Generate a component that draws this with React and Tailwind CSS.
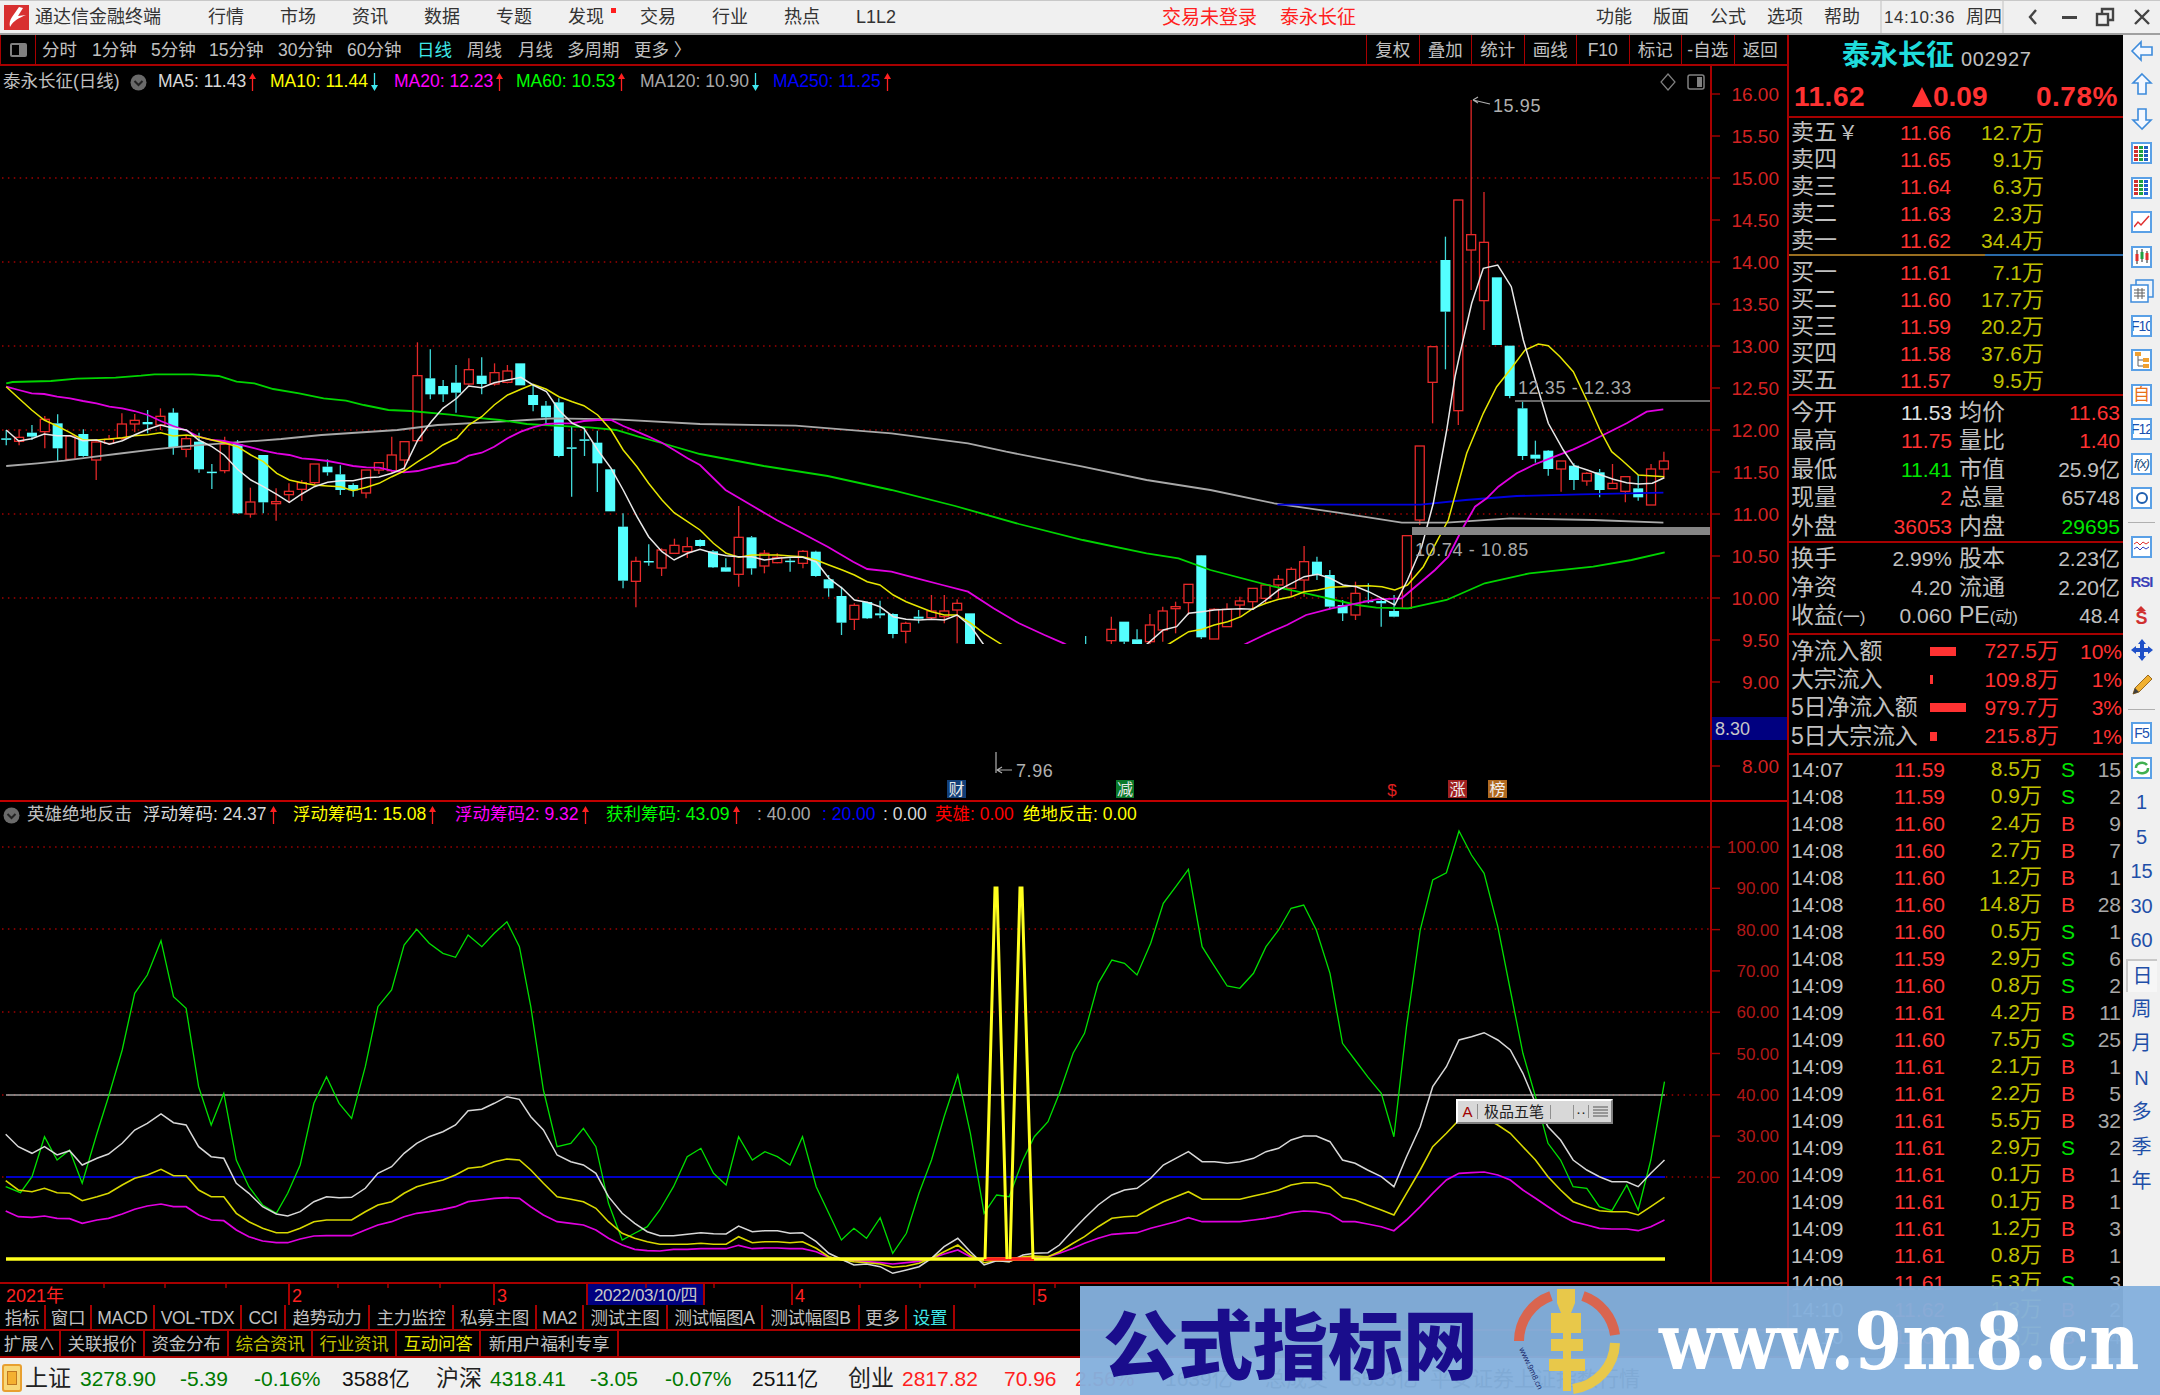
import React from "react";

const X = (i) => 6.25 + 12.85 * i;
const z9 = ([x, y]) => [x * 0.4464, 340 + y / 3];
const z10 = ([x, y]) => [700 + x * 0.638, 340 + y / 3];
const z11 = ([x, y]) => [1400 + x / 3, 90 + y / 3];
const z12 = ([x, y]) => [x * 1.1416, 840 + y / 3];
const P = (a) => a.map((p) => p[0].toFixed(1) + "," + p[1].toFixed(1)).join(" ");

// [up?, high, top, bottom, low] in crop-space y
const C9 = [
  [0,270,295,299,316],[1,268,292,304,316],[0,255,278,290,300],[1,228,238,275,325],[0,223,250,325,362],
  [1,285,288,358,360],[0,268,282,348,350],[1,302,306,360,420],[1,285,298,310,315],[1,220,252,295,300],
  [1,222,241,252,277],[0,210,246,253,280],[1,205,229,255,270],[0,205,218,322,344],[1,288,296,328,352],
  [0,278,305,388,398],[0,372,395,397,447],[1,290,313,392,400],[0,300,312,520,522],[1,443,486,522,533],
  [0,345,345,487,520],[1,445,485,491,542],[1,430,454,464,488],[1,420,428,448,483],[1,372,372,428,434],
  [0,358,380,397,407],[0,376,403,450,465],[0,430,435,451,470],[1,390,390,459,475],[1,368,368,390,402],
  [1,290,345,392,400],[1,305,305,360,390],[1,7,107,302,302],[0,28,115,163,178],[0,120,138,163,186],
  [0,75,128,158,218],[1,55,89,132,135],[0,52,107,132,163],[1,70,98,132,137],[1,75,93,127,130],
  [0,70,70,136,136],[0,135,165,195,214],[0,183,197,232,258],[0,175,187,348,352],[0,258,322,326,470],
  [0,264,298,302,348],[0,272,308,370,456],[0,388,388,514,514],[0,520,560,722,745],[1,650,664,724,802],
  [0,613,663,667,677],[1,625,630,684,708],[1,596,616,640,642],[1,592,620,635,654],
];
const C10 = {
  54:[0,598,600,618,620],55:[0,630,634,682,684],56:[0,655,682,695,696],57:[1,498,592,703,740],58:[0,588,592,685,704],
  59:[1,630,640,678,700],60:[1,640,652,668,670],61:[0,655,662,665,695],62:[1,630,634,670,685],63:[0,632,635,708,710],
  64:[0,705,718,745,770],65:[0,740,768,848,885],66:[1,790,796,838,870],67:[0,785,786,835,837],68:[0,782,820,826,835],
  69:[0,820,822,882,895],70:[1,845,850,874,910],71:[0,810,830,836,850],72:[1,765,813,833,840],73:[1,765,813,830,850],
  74:[1,778,790,810,910],75:[0,820,820,960,960],84:[0,888,960,960,960],86:[1,830,868,902,950],87:[0,845,845,905,950],
  88:[0,868,898,950,950],89:[1,822,855,905,950],90:[1,800,813,870,905],91:[1,785,800,806,880],92:[1,732,733,788,825],
  93:[0,645,646,892,897],94:[1,805,808,897,897],95:[1,790,808,860,860],96:[1,770,783,795,830],97:[1,745,745,785,810],
  98:[1,735,735,775,790],99:[1,705,718,735,775],100:[1,682,688,745,770],101:[1,618,665,720,770],102:[0,650,665,705,720],
  103:[0,690,705,800,808],104:[0,780,795,820,843],105:[1,725,760,825,840],106:[0,730,782,786,790],107:[0,775,783,790,860],
  108:[0,765,813,830,832],109:[1,587,587,805,805],
};
const C11 = [
  [1,1068,1068,1290,1305],[1,770,770,877,1000],[0,440,510,665,838],[1,330,330,962,1005],[1,30,434,480,600],
  [1,306,457,632,720],[0,562,562,765,765],[0,767,767,918,925],[0,935,955,1098,1110],[0,1052,1094,1106,1118],
  [0,1080,1082,1137,1157],[1,1113,1113,1137,1205],[0,1120,1127,1170,1200],[1,1147,1150,1173,1187],[0,1137,1147,1200,1222],
  [1,1122,1180,1196,1197],[1,1158,1160,1204,1237],[0,1155,1195,1222,1232],[1,1122,1137,1245,1245],[1,1085,1113,1137,1165],
];
const candles = [];
C9.forEach((c, i) => candles.push([i, c[0], ...c.slice(1).map((v) => 340 + v / 3)]));
Object.entries(C10).forEach(([i, c]) => candles.push([+i, c[0], ...c.slice(1).map((v) => 340 + v / 3)]));
C11.forEach((c, i) => candles.push([110 + i, c[0], ...c.slice(1).map((v) => 90 + v / 3)]));

const MA5 = [
  ...[[14,270],[42,303],[71,296],[99,282],[128,287],[157,287],[186,302],[216,300],[245,313],[274,302],[301,285],[331,268],[360,255],[388,265],[418,270],[445,300],[475,320],[502,345],[532,388],[562,420],[590,440],[620,463],[648,487],[676,462],[704,440],[734,427],[763,422],[791,422],[821,413],[849,411],[878,400],[905,385],[936,300],[966,245],[992,205],[1023,175],[1050,138],[1079,143],[1107,128],[1137,120],[1167,112],[1194,135],[1224,155],[1252,210],[1282,250],[1308,265],[1339,330],[1369,385],[1396,450],[1427,530],[1453,590],[1483,635],[1510,660],[1540,640]].map(z9),
  ...[[0,628],[21,640],[41,647],[61,650],[81,650],[101,660],[122,655],[142,652],[161,652],[182,665],[202,715],[223,745],[242,780],[262,787],[282,800],[303,830],[323,838],[343,840],[363,838],[383,840],[403,825],[425,860],[445,915],[560,1050],[690,930],[726,870],[747,860],[766,820],[787,815],[806,810],[827,808],[848,806],[867,808],[887,780],[907,750],[927,730],[947,710],[968,703],[988,715],[1008,735],[1029,740],[1048,755],[1069,775],[1089,795],[1109,720]].map(z10),
  ...[[65,1370],[100,1240],[140,1020],[165,860],[180,790],[215,640],[250,535],[293,525],[334,590],[370,750],[400,850],[430,950],[445,1000],[490,1080],[522,1127],[562,1140],[603,1155],[640,1168],[680,1178],[716,1182],[757,1180],[793,1163]].map(z11),
];
const MA10 = [
  ...[[14,140],[42,175],[71,210],[99,240],[128,258],[157,278],[186,300],[216,300],[245,297],[274,293],[301,287],[331,284],[360,278],[388,288],[418,285],[445,290],[475,300],[502,308],[532,320],[562,345],[590,365],[620,400],[648,420],[676,428],[704,435],[734,438],[763,440],[791,452],[821,442],[849,430],[878,410],[905,393],[936,365],[966,340],[992,315],[1023,295],[1050,255],[1079,230],[1107,195],[1137,165],[1167,148],[1194,133],[1224,148],[1252,170],[1282,185],[1308,197],[1339,225],[1369,270],[1396,330],[1427,380],[1453,430],[1483,480],[1510,518],[1540,545]].map(z9),
  ...[[0,570],[21,610],[41,640],[61,652],[81,645],[101,645],[122,645],[142,648],[161,650],[182,660],[202,675],[223,690],[242,705],[262,725],[282,735],[303,765],[323,785],[343,800],[363,815],[383,825],[403,825],[425,850],[445,880],[470,910],[600,1050],[735,912],[766,875],[787,868],[806,855],[827,845],[848,830],[867,805],[887,790],[907,778],[927,770],[947,755],[968,750],[988,742],[1008,740],[1029,738],[1048,737],[1069,740],[1089,750],[1109,735]].map(z10),
  ...[[70,1430],[145,1290],[200,1090],[250,970],[290,890],[330,840],[375,780],[415,762],[445,767],[480,800],[520,845],[560,930],[600,1020],[635,1085],[665,1110],[715,1155],[793,1160]].map(z11),
];
const MA20 = [
  ...[[14,140],[42,150],[71,160],[99,162],[128,170],[157,175],[186,183],[216,190],[245,200],[274,205],[301,213],[331,225],[360,243],[388,258],[418,272],[445,290],[475,300],[502,303],[532,312],[562,322],[590,332],[620,340],[648,345],[676,355],[704,358],[734,363],[763,370],[791,378],[821,382],[849,383],[878,392],[905,397],[936,393],[966,383],[992,375],[1023,367],[1050,347],[1079,338],[1107,320],[1137,295],[1167,275],[1194,262],[1224,252],[1252,250],[1282,250],[1308,243],[1339,240],[1369,240],[1396,258],[1427,275],[1453,290],[1483,308],[1510,330],[1540,355]].map(z9),
  ...[[0,375],[40,450],[80,495],[120,540],[160,580],[200,620],[240,665],[262,687],[300,695],[340,715],[380,735],[420,755],[460,805],[500,850],[540,885],[570,910],[700,1050],[855,912],[890,880],[920,855],[950,825],[990,805],[1030,790],[1060,778],[1100,775]].map(z10),
  ...[[105,1440],[145,1400],[185,1320],[225,1250],[260,1225],[295,1190],[350,1150],[400,1125],[450,1105],[520,1078],[560,1060],[620,1030],[680,1000],[740,965],[790,958]].map(z11),
];
const MA60 = [
  ...[[14,130],[28,126],[114,123],[172,116],[259,113],[316,107],[346,103],[432,103],[490,108],[530,125],[570,130],[612,147],[670,160],[725,175],[775,182],[815,195],[870,210],[920,213],[1008,224],[1065,233],[1120,240],[1180,252],[1240,257],[1320,262],[1380,270],[1430,290],[1490,312]].map(z9),
  ...[[0,342],[100,378],[200,408],[300,450],[400,498],[500,552],[600,600],[700,640],[750,655],[800,690],[900,740],[950,760],[1030,795],[1060,803],[1110,805],[1170,780],[1230,730],[1300,700],[1400,680],[1460,660],[1512,637]].map(z10),
];
const MA120 = [
  ...[[14,378],[84,370],[144,362],[200,352],[260,342],[345,328],[405,320],[520,308],[630,297],[720,285],[890,270],[980,255],[1120,245],[1180,240],[1240,235],[1380,238]].map(z9),
  ...[[0,252],[150,257],[300,280],[420,310],[480,335],[600,380],[700,420],[800,450],[900,490],[1000,518],[1100,548],[1170,548],[1270,535],[1400,540],[1510,548]].map(z10),
];
const MA250 = [[905,494],[1130,494],[1200,480],[1280,468],[1380,463],[1510,458]].map(z10);

const GREEN = [[5,1040],[18,1058],[28,1010],[39,890],[50,960],[61,930],[72,1030],[85,880],[95,770],[107,630],[118,460],[129,405],[141,302],[152,470],[163,505],[174,740],[185,855],[196,760],[207,960],[218,1040],[230,1095],[242,1120],[252,1060],[263,975],[275,790],[286,710],[297,790],[308,835],[320,680],[331,500],[343,450],[354,315],[365,268],[376,310],[388,340],[399,352],[410,285],[422,320],[433,280],[444,245],[455,320],[465,500],[476,750],[488,920],[500,910],[511,865],[522,920],[533,1090],[545,1200],[556,1180],[567,1160],[578,1110],[590,1040],[602,950],[614,925],[625,1000],[636,1035],[647,890],[659,960],[670,935],[681,950],[692,975],[703,890],[715,1040],[726,1120],[737,1200],[748,1165],[759,1195],[771,1133],[782,1240],[794,1180],[805,1060],[816,960],[827,830],[839,705],[850,880],[862,1120],[873,1065],[884,1070],[896,960],[906,890],[918,845],[928,760],[940,640],[950,580],[962,430],[974,360],[985,370],[996,405],[1008,310],[1019,190],[1030,140],[1041,88],[1053,320],[1064,380],[1075,438],[1086,445],[1098,400],[1109,320],[1120,270],[1131,205],[1142,195],[1153,270],[1165,400],[1176,610],[1187,660],[1198,710],[1210,760],[1221,890],[1232,560],[1244,270],[1255,120],[1267,98],[1278,-27],[1289,45],[1300,100],[1312,260],[1323,450],[1334,640],[1345,770],[1356,910],[1367,960],[1378,1040],[1390,1045],[1401,1100],[1412,1112],[1425,1035],[1435,1110],[1446,960],[1458,725]].map(z12);
const WHITE = [[5,883],[16,920],[28,940],[39,920],[50,945],[61,932],[72,975],[85,955],[95,942],[107,910],[118,870],[129,850],[141,822],[152,848],[163,855],[174,920],[185,950],[196,955],[207,1030],[218,1060],[230,1100],[242,1122],[252,1128],[263,1115],[275,1085],[286,1070],[297,1073],[308,1072],[320,1045],[331,1000],[343,980],[354,940],[365,910],[376,890],[388,875],[399,855],[410,812],[422,808],[433,790],[444,770],[455,778],[465,830],[476,870],[488,945],[500,965],[511,975],[522,1000],[533,1070],[545,1120],[556,1150],[567,1175],[578,1187],[590,1187],[602,1183],[614,1178],[625,1181],[636,1182],[647,1158],[659,1175],[670,1172],[681,1172],[692,1180],[703,1178],[715,1205],[726,1240],[737,1258],[748,1275],[759,1272],[771,1280],[782,1300],[794,1290],[805,1280],[816,1255],[827,1220],[839,1195],[850,1235],[862,1275],[873,1262],[884,1265],[896,1245],[906,1240],[918,1238],[928,1215],[940,1170],[950,1135],[962,1095],[974,1065],[985,1050],[996,1045],[1008,1015],[1019,975],[1030,955],[1041,935],[1053,965],[1064,965],[1075,970],[1086,965],[1098,955],[1109,935],[1120,925],[1131,900],[1142,888],[1153,888],[1165,905],[1176,960],[1187,970],[1198,990],[1210,1010],[1221,1040],[1232,950],[1244,860],[1255,740],[1267,680],[1278,600],[1289,590],[1300,578],[1312,600],[1323,630],[1334,700],[1345,790],[1356,860],[1367,900],[1378,960],[1390,990],[1401,1010],[1412,1025],[1425,1025],[1435,1040],[1446,1000],[1458,960]].map(z12);
const YEL = [[5,1022],[16,1050],[28,1055],[39,1045],[50,1058],[61,1060],[72,1082],[85,1070],[95,1060],[107,1035],[118,1015],[129,1005],[141,988],[152,1007],[163,1007],[174,1050],[185,1070],[196,1070],[207,1120],[218,1145],[230,1165],[242,1178],[252,1178],[263,1165],[275,1145],[286,1140],[297,1140],[308,1140],[320,1115],[331,1095],[343,1085],[354,1060],[365,1040],[376,1030],[388,1020],[399,1005],[410,985],[422,980],[433,965],[444,957],[455,960],[465,990],[476,1030],[488,1070],[500,1078],[511,1085],[522,1105],[533,1145],[545,1180],[556,1195],[567,1205],[578,1213],[590,1213],[602,1213],[614,1210],[625,1213],[636,1213],[647,1190],[659,1208],[670,1205],[681,1205],[692,1208],[703,1205],[715,1225],[726,1250],[737,1260],[748,1265],[759,1268],[771,1272],[782,1282],[794,1278],[805,1270],[816,1255],[827,1235],[839,1215],[850,1245],[862,1268],[873,1262],[884,1265],[896,1250],[906,1248],[918,1250],[928,1235],[940,1210],[950,1190],[962,1160],[974,1135],[985,1130],[996,1128],[1008,1105],[1019,1085],[1030,1070],[1041,1055],[1053,1078],[1064,1078],[1075,1078],[1086,1078],[1098,1068],[1109,1060],[1120,1050],[1131,1035],[1142,1028],[1153,1028],[1165,1040],[1176,1072],[1187,1080],[1198,1095],[1210,1110],[1221,1125],[1232,1060],[1244,990],[1255,920],[1267,880],[1278,840],[1289,835],[1300,832],[1312,855],[1323,880],[1334,920],[1345,960],[1356,1010],[1367,1050],[1378,1085],[1390,1100],[1401,1112],[1412,1115],[1425,1115],[1435,1125],[1446,1100],[1458,1072]].map(z12);
const MAG = [[5,1113],[16,1130],[28,1132],[39,1128],[50,1135],[61,1136],[72,1150],[85,1140],[95,1135],[107,1122],[118,1108],[129,1098],[141,1092],[152,1100],[163,1100],[174,1125],[185,1140],[196,1142],[207,1170],[218,1190],[230,1203],[242,1208],[252,1208],[263,1197],[275,1188],[286,1187],[297,1187],[308,1187],[320,1170],[331,1155],[343,1145],[354,1130],[365,1120],[376,1115],[388,1108],[399,1100],[410,1085],[422,1080],[433,1075],[444,1073],[455,1075],[465,1100],[476,1125],[488,1145],[500,1150],[511,1155],[522,1170],[533,1195],[545,1215],[556,1228],[567,1232],[578,1233],[590,1228],[602,1228],[614,1226],[625,1226],[636,1226],[647,1216],[659,1226],[670,1224],[681,1224],[692,1226],[703,1226],[715,1235],[726,1252],[737,1258],[748,1262],[759,1265],[771,1268],[782,1272],[794,1268],[805,1264],[816,1255],[827,1242],[839,1230],[850,1250],[862,1260],[918,1250],[928,1240],[940,1225],[950,1210],[962,1195],[974,1183],[985,1180],[996,1178],[1008,1165],[1019,1155],[1030,1145],[1041,1133],[1053,1145],[1064,1145],[1075,1145],[1086,1145],[1098,1140],[1109,1135],[1120,1128],[1131,1118],[1142,1113],[1153,1115],[1165,1122],[1176,1145],[1187,1145],[1198,1152],[1210,1160],[1221,1172],[1232,1140],[1244,1100],[1255,1060],[1267,1020],[1278,1000],[1289,998],[1300,996],[1312,1005],[1323,1020],[1334,1050],[1345,1075],[1356,1100],[1367,1125],[1378,1145],[1390,1155],[1401,1165],[1412,1167],[1425,1167],[1435,1172],[1446,1160],[1458,1140]].map(z12);

const RED = "#a80000";

function Arrow({ down, color }) {
  return (
    <svg width="9" height="20" viewBox="0 0 9 20" className="shrink-0 ml-[2px]">
      {down ? <path d="M4.5 1V14" stroke={color} strokeWidth="1.3" /> : <path d="M4.5 6V19" stroke={color} strokeWidth="1.3" />}
      {down ? <path d="M1 13H8L4.5 19Z" fill={color} /> : <path d="M1 7H8L4.5 1Z" fill={color} />}
    </svg>
  );
}
function Chevron() {
  return (
    <svg width="17" height="17" viewBox="0 0 17 17" className="shrink-0">
      <circle cx="8.5" cy="8.5" r="8" fill="#6a6a6a" />
      <path d="M4.5 7L8.5 11L12.5 7" fill="none" stroke="#222" strokeWidth="2" />
    </svg>
  );
}

function MainChart() {
  const ticks = [];
  for (let i = 0; i <= 16; i++) ticks.push(16 - i * 0.5);
  return (
    <svg width="1787" height="734" viewBox="0 66 1787 734" className="block font-['Liberation_Sans','Noto_Sans_CJK_SC',sans-serif]">
      {[178, 262, 346, 430, 514, 598].map((y) => (
        <line key={y} x1="2" x2="1711" y1={y} y2={y} stroke="#a00000" strokeWidth="1.4" strokeDasharray="1.5 4.4" />
      ))}
      {candles.map(([i, up, h, t, b, l]) => {
        const x = X(i);
        const col = up ? "#ff3232" : "#54ffff";
        return (
          <g key={i}>
            <line x1={x} x2={x} y1={h} y2={t} stroke={up ? "#e02828" : "#40d8d8"} strokeWidth="1.3" />
            <line x1={x} x2={x} y1={b} y2={l} stroke={up ? "#e02828" : "#40d8d8"} strokeWidth="1.3" />
            {up ? (
              <rect x={x - 4.5} y={t} width="9" height={Math.max(b - t, 1)} fill="#000" stroke="#e82a2a" strokeWidth="1.3" />
            ) : (
              <rect x={x - 5} y={t} width="10" height={Math.max(b - t, 1.5)} fill={col} />
            )}
          </g>
        );
      })}
      <polyline points={P(MA120)} fill="none" stroke="#a8a8a8" strokeWidth="1.8" />
      <polyline points={P(MA60)} fill="none" stroke="#00d400" strokeWidth="1.8" />
      <polyline points={P(MA250)} fill="none" stroke="#0000e0" strokeWidth="1.8" />
      <polyline points={P(MA20)} fill="none" stroke="#e000e0" strokeWidth="1.8" />
      <polyline points={P(MA10)} fill="none" stroke="#e6e600" strokeWidth="1.5" />
      <polyline points={P(MA5)} fill="none" stroke="#e8e8e8" strokeWidth="1.5" />

      <rect x="0" y="644" width="1711" height="108" fill="#000" />

      <rect x="1412" y="527" width="298" height="8" fill="#858585" />
      <line x1="1515" x2="1711" y1="401" y2="401" stroke="#8a8a8a" strokeWidth="1.4" />
      <text x="1518" y="394" fontSize="18" letterSpacing="0.6" className="fill-[#a8a8a8]">12.35 - 12.33</text>
      <text x="1415" y="556" fontSize="18" letterSpacing="0.6" className="fill-[#a8a8a8]">10.74 - 10.85</text>
      <text x="1493" y="112" fontSize="18" letterSpacing="0.6" className="fill-[#b0b0b0]">15.95</text>
      <path d="M1473 100L1490 104M1473 100L1478 97M1473 100L1478 103" stroke="#b0b0b0" fill="none" strokeWidth="1.2" />
      <path d="M996 752V773M997 770H1012M997 770L1002 767M997 770L1002 773" stroke="#b0b0b0" fill="none" strokeWidth="1.2" />
      <text x="1016" y="777" fontSize="18" letterSpacing="0.6" className="fill-[#b0b0b0]">7.96</text>

      <rect x="947" y="780" width="19" height="18" fill="#123f78" />
      <text x="956.5" y="795" fontSize="16" textAnchor="middle" className="fill-[#e8e8e8]">财</text>
      <rect x="1116" y="780" width="18" height="18" fill="#0a7a2a" />
      <text x="1125" y="795" fontSize="16" textAnchor="middle" className="fill-[#e8e8e8]">减</text>
      <text x="1392" y="796" fontSize="17" textAnchor="middle" className="fill-[#e02020]">$</text>
      <rect x="1448" y="780" width="19" height="18" fill="#a02020" />
      <text x="1457.5" y="795" fontSize="16" textAnchor="middle" className="fill-[#f0f0f0]">涨</text>
      <rect x="1488" y="780" width="19" height="18" fill="#b06a20" />
      <text x="1497.5" y="795" fontSize="16" textAnchor="middle" className="fill-[#f0f0f0]">榜</text>

      <path d="M1668 74L1675 82L1668 90L1661 82Z" fill="none" stroke="#808080" strokeWidth="1.2" />
      <rect x="1688" y="75" width="16" height="14" rx="2" fill="none" stroke="#808080" strokeWidth="1.5" />
      <rect x="1697" y="77" width="5" height="10" fill="#808080" />

      <line x1="1711" x2="1711" y1="66" y2="800" stroke={RED} strokeWidth="2" />
      {ticks.map((t) => {
        const y = 94 + (16 - t) * 84;
        return (
          <g key={t}>
            <line x1="1711" x2="1720" y1={y} y2={y} stroke={RED} strokeWidth="1.4" />
            {t !== 8.5 && (
              <text x="1779" y={y + 7} fontSize="19" textAnchor="end" className="fill-[#d42222]">{t.toFixed(2)}</text>
            )}
          </g>
        );
      })}
      <rect x="1712" y="717" width="75" height="23" fill="#000080" />
      <text x="1715" y="735" fontSize="18" className="fill-[#c8c8c8]">8.30</text>
    </svg>
  );
}

function IndicatorChart() {
  const labels = [100, 90, 80, 70, 60, 50, 40, 30, 20];
  return (
    <svg width="1787" height="480" viewBox="0 802 1787 480" className="block font-['Liberation_Sans',sans-serif]">
      {[847, 929, 1012, 1095, 1177].map((y) => (
        <line key={y} x1="2" x2="1711" y1={y} y2={y} stroke="#a00000" strokeWidth="1.4" strokeDasharray="1.5 4.4" />
      ))}
      <line x1="6" x2="1665" y1="1095" y2="1095" stroke="#a0a0a0" strokeWidth="1.6" />
      <line x1="6" x2="1665" y1="1177" y2="1177" stroke="#0000c8" strokeWidth="1.8" />
      <polyline points={P(GREEN)} fill="none" stroke="#00e000" strokeWidth="1.3" />
      <polyline points={P(MAG)} fill="none" stroke="#e000e0" strokeWidth="1.7" />
      <polyline points={P(YEL)} fill="none" stroke="#d8d800" strokeWidth="1.6" />
      <polyline points={P(WHITE)} fill="none" stroke="#d8d8d8" strokeWidth="1.5" />
      <line x1="6" x2="1665" y1="1259" y2="1259" stroke="#ffff1e" strokeWidth="3.4" />
      <line x1="984" x2="1034" y1="1259" y2="1259" stroke="#ff1e1e" strokeWidth="3.4" />
      <polyline points="985,1259 995,888 997,888 1007,1259" fill="none" stroke="#ffff1e" strokeWidth="3" />
      <polyline points="1010,1259 1020,888 1022,888 1033,1259" fill="none" stroke="#ffff1e" strokeWidth="3" />
      <line x1="1711" x2="1711" y1="802" y2="1282" stroke={RED} strokeWidth="2" />
      {labels.map((v) => {
        const y = 1260 - v * 4.13;
        return (
          <g key={v}>
            <line x1="1711" x2="1720" y1={y} y2={y} stroke={RED} strokeWidth="1.4" />
            <text x="1779" y={y + 6} fontSize="17" textAnchor="end" fill="#b01818">{v.toFixed(2)}</text>
          </g>
        );
      })}
    </svg>
  );
}

const PERIODS = [
  ["分时", "w-[50px]", "text-[#c0c0c0]"],
  ["1分钟", "w-[59px]", "text-[#c0c0c0]"],
  ["5分钟", "w-[58px]", "text-[#c0c0c0]"],
  ["15分钟", "w-[69px]", "text-[#c0c0c0]"],
  ["30分钟", "w-[69px]", "text-[#c0c0c0]"],
  ["60分钟", "w-[70px]", "text-[#c0c0c0]"],
  ["日线", "w-[50px]", "text-[#3fe8e8]"],
  ["周线", "w-[51px]", "text-[#c0c0c0]"],
  ["月线", "w-[49px]", "text-[#c0c0c0]"],
  ["多周期", "w-[67px]", "text-[#c0c0c0]"],
  ["更多 〉", "w-[60px]", "text-[#c0c0c0]"],
];
const TOOLS = ["复权", "叠加", "统计", "画线", "F10", "标记", "-自选", "返回"];

const SELL = [
  ["卖五", "11.66", "12.7"], ["卖四", "11.65", "9.1"], ["卖三", "11.64", "6.3"], ["卖二", "11.63", "2.3"], ["卖一", "11.62", "34.4"],
];
const BUY = [
  ["买一", "11.61", "7.1"], ["买二", "11.60", "17.7"], ["买三", "11.59", "20.2"], ["买四", "11.58", "37.6"], ["买五", "11.57", "9.5"],
];
const R = "text-[#ff3232]", W = "text-[#e0e0e0]", G = "text-[#00e600]", S = "text-[#c0c0c0]";
const STATS = [
  ["今开", "11.53", W, "均价", "11.63", R], ["最高", "11.75", R, "量比", "1.40", R], ["最低", "11.41", G, "市值", "25.9亿", S],
  ["现量", "2", R, "总量", "65748", S], ["外盘", "36053", R, "内盘", "29695", G],
];
const STATS2 = [
  ["换手", "2.99%", S, "股本", "2.23亿", S], ["净资", "4.20", S, "流通", "2.20亿", S], ["收益(一)", "0.060", S, "PE(动)", "48.4", S],
];
const FLOW = [
  ["净流入额", "w-[26px]", "727.5", "10%"], ["大宗流入", "w-[3px]", "109.8", "1%"], ["5日净流入额", "w-[36px]", "979.7", "3%"], ["5日大宗流入", "w-[7px]", "215.8", "1%"],
];
const TICKS = [
  ["14:07","11.59","8.5","S","15"],["14:08","11.59","0.9","S","2"],["14:08","11.60","2.4","B","9"],["14:08","11.60","2.7","B","7"],["14:08","11.60","1.2","B","1"],
  ["14:08","11.60","14.8","B","28"],["14:08","11.60","0.5","S","1"],["14:08","11.59","2.9","S","6"],["14:09","11.60","0.8","S","2"],["14:09","11.61","4.2","B","11"],
  ["14:09","11.60","7.5","S","25"],["14:09","11.61","2.1","B","1"],["14:09","11.61","2.2","B","5"],["14:09","11.61","5.5","B","32"],["14:09","11.61","2.9","S","2"],
  ["14:09","11.61","0.1","B","1"],["14:09","11.61","0.1","B","1"],["14:09","11.61","1.2","B","3"],["14:09","11.61","0.8","B","1"],["14:09","11.61","5.3","S","3"],
  ["14:10","11.62","1.3","B","2"],["14:10","11.62","2.6","B","4"],
];

function Quote({ label, price, vol, extra }) {
  return (
    <div className="flex items-center h-[27px] pt-[2px]">
      <span className="w-[109px] text-[23px] text-[#c0c0c0] flex items-center leading-none">
        {label}
        {extra && <span className="ml-[1px] text-[20px]">￥</span>}
      </span>
      <span className="w-[60px] text-[21px] leading-none text-[#ff3232]">{price}</span>
      <span className="w-[84px] text-right text-[21px] leading-none text-[#c0c000]">
        {vol}
        <span className="text-[22px]">万</span>
      </span>
    </div>
  );
}
function Label({ t }) {
  const m = t.match(/^(.*)(\(.*\))$/);
  return (
    <span className="w-[76px] shrink-0 text-[23px] text-[#c0c0c0] whitespace-nowrap leading-none">
      {m ? m[1] : t}
      {m && <span className="text-[17px]">{m[2]}</span>}
    </span>
  );
}
function Stat({ a, v, vc, b, w, wc }) {
  return (
    <div className="flex items-center h-[28.5px] pt-[2px] text-[21px] leading-none">
      <Label t={a} />
      <span className={"w-[85px] text-right " + vc}>{v}</span>
      <span className="w-[7px]"></span>
      <Label t={b} />
      <span className={"w-[85px] text-right " + wc}>{w}</span>
    </div>
  );
}

function RightPanel() {
  return (
    <div className="w-[336px] shrink-0 border-l-2 border-[#a80000] flex flex-col overflow-hidden">
      <div className="h-[41px] flex items-center pl-[53px]">
        <span className="text-[28px] text-[#1fdcdc] font-bold leading-none">泰永长征</span>
        <span className="ml-[7px] mt-[6px] text-[20px] text-[#c0c0c0] tracking-[0.6px]">002927</span>
      </div>
      <div className="h-[42px] flex items-center pl-[5px] pt-[2px] border-b-2 border-[#a80000] text-[28px] font-bold text-[#ff3232] leading-none">
        <span className="w-[118px] tracking-[0.5px]">11.62</span>
        <span className="w-[124px] flex items-center">
          <span className="w-0 h-0 border-l-[10px] border-r-[10px] border-b-[20px] border-l-transparent border-r-transparent border-b-[#ff3232]"></span>
          <span className="ml-[1px]">0.09</span>
        </span>
        <span className="tracking-[0.5px]">0.78%</span>
      </div>
      <div className="pl-[2px]">
        {SELL.map((r, i) => (
          <Quote key={r[0]} label={r[0]} price={r[1]} vol={r[2]} extra={i === 0} />
        ))}
      </div>
      <div className="h-[2px] flex mt-[1px] mb-[2px]">
        <div className="w-[196px] bg-[#9a6f20]"></div>
        <div className="flex-1 bg-[#2a6aa8]"></div>
      </div>
      <div className="pl-[2px]">
        {BUY.map((r) => (
          <Quote key={r[0]} label={r[0]} price={r[1]} vol={r[2]} />
        ))}
      </div>
      <div className="h-[2px] bg-[#a80000] mt-[1px] mb-[1px]"></div>
      <div className="pl-[2px]">
        {STATS.map((r) => (
          <Stat key={r[0]} a={r[0]} v={r[1]} vc={r[2]} b={r[3]} w={r[4]} wc={r[5]} />
        ))}
      </div>
      <div className="h-[2px] bg-[#a80000] mt-[1px] mb-[1px]"></div>
      <div className="pl-[2px]">
        {STATS2.map((r) => (
          <Stat key={r[0]} a={r[0]} v={r[1]} vc={r[2]} b={r[3]} w={r[4]} wc={r[5]} />
        ))}
      </div>
      <div className="h-[2px] bg-[#a80000] mt-[4px] mb-[1px]"></div>
      <div className="pl-[2px]">
        {FLOW.map((r) => (
          <div key={r[0]} className="flex items-center h-[28.4px] pt-[2px] leading-none">
            <span className="w-[139px] text-[23px] text-[#c0c0c0] whitespace-nowrap tracking-[-0.2px]">{r[0]}</span>
            <span className="w-[50px]"><span className={"block h-[9px] bg-[#ff3232] " + r[1]}></span></span>
            <span className="w-[79px] text-[21px] text-[#ff3232] text-right whitespace-nowrap">{r[2]}<span className="text-[22px]">万</span></span>
            <span className="w-[63px] text-[21px] text-[#ff3232] text-right">{r[3]}</span>
          </div>
        ))}
      </div>
      <div className="h-[2px] bg-[#a80000] mt-[3px] mb-[1px]"></div>
      <div className="pl-[2px]">
        {TICKS.map((r, i) => (
          <div key={i} className="flex items-center h-[27px] text-[21px] leading-none">
            <span className="w-[103px] text-[#c0c0c0]">{r[0]}</span>
            <span className="w-[60px] text-[#ff3232]">{r[1]}</span>
            <span className="w-[88px] text-right text-[#c0c000] whitespace-nowrap">{r[2]}<span className="text-[22px]">万</span></span>
            <span className={"ml-[19px] w-[30px] " + (r[3] === "S" ? "text-[#00e600]" : "text-[#ff3232]")}>{r[3]}</span>
            <span className="w-[30px] text-right text-[#a8a8a8]">{r[4]}</span>
          </div>
        ))}
      </div>
    </div>
  );
}

const BLUE = "#3d8bdb";
function Box({ children }) {
  return (
    <span className="w-[21px] h-[22px] border-2 border-[#5aa0e6] bg-white flex items-center justify-center overflow-hidden text-[12px] leading-none text-[#1a50b0]">
      {children}
    </span>
  );
}
function BigArrow({ d }) {
  return (
    <svg width="24" height="24" viewBox="0 0 24 24">
      <path d={d} fill="#f4f8ff" stroke={BLUE} strokeWidth="1.6" />
    </svg>
  );
}
const Bars = ({ cols }) => (
  <svg width="15" height="15" viewBox="0 0 15 15">
    {cols.map((c, i) => (
      <rect key={i} x={i * 5} y="0" width="4" height="15" fill={c} />
    ))}
    {[3, 7, 11].map((y) => (
      <rect key={y} x="0" y={y} width="15" height="1" fill="#fff" />
    ))}
  </svg>
);
const SIDE = [
  <BigArrow key="a" d="M2 12L11 3V8H22V16H11V21Z" />,
  <BigArrow key="b" d="M12 2L21 11H16V22H8V11H3Z" />,
  <BigArrow key="c" d="M12 22L3 13H8V2H16V13H21Z" />,
  <Box key="d"><Bars cols={["#d03030", "#20a040", "#2060c0"]} /></Box>,
  <Box key="e"><Bars cols={["#d03030", "#20a040", "#2060d0"]} /></Box>,
  <Box key="f"><svg width="16" height="14" viewBox="0 0 16 14"><path d="M0 12L4 7L7 10L15 1" fill="none" stroke="#e03030" strokeWidth="1.5" /></svg></Box>,
  <Box key="g"><svg width="16" height="16" viewBox="0 0 16 16"><path d="M3 1V15M8 0V13M13 2V14" stroke="#202020" /><rect x="1.5" y="5" width="3" height="7" fill="#e03030" /><rect x="6.5" y="3" width="3" height="7" fill="#20a040" /><rect x="11.5" y="4" width="3" height="7" fill="#e03030" /></svg></Box>,
  <svg key="h" width="26" height="24" viewBox="0 0 26 24"><rect x="7" y="1" width="17" height="17" fill="#eef4fb" stroke={BLUE} strokeWidth="1.5" /><rect x="2" y="6" width="17" height="17" fill="#fff" stroke={BLUE} strokeWidth="1.5" /><path d="M5 11H16M5 14H16M5 17H16M9 9V20M13 9V20" stroke="#606060" /></svg>,
  <Box key="i"><span className="tracking-[-1px] text-[14px]">F10</span></Box>,
  <Box key="j"><svg width="14" height="16" viewBox="0 0 14 16"><path d="M3 3V14H8M3 8H8" fill="none" stroke="#606060" /><rect x="0" y="0" width="6" height="4" fill="#f0a030" /><rect x="8" y="6" width="6" height="4" fill="#f0a030" /><rect x="8" y="12" width="6" height="4" fill="#f0a030" /></svg></Box>,
  <Box key="k"><span className="text-[#e8701a] text-[17px]">自</span></Box>,
  <Box key="l"><span className="tracking-[-1px] text-[14px]">F12</span></Box>,
  <Box key="m"><span className="italic text-[#205080] text-[13px] tracking-[-1px]">f(x)</span></Box>,
  <Box key="n"><svg width="14" height="14" viewBox="0 0 14 14"><circle cx="7" cy="7" r="5" fill="none" stroke="#2060b0" strokeWidth="2" /></svg></Box>,
];
const SIDE2 = [
  <Box key="a"><svg width="16" height="14" viewBox="0 0 16 14"><path d="M0 4L3 2L6 5L9 2L12 4L15 2" fill="none" stroke="#e03030" /><path d="M0 9L3 7L6 10L9 7L12 9L15 7" fill="none" stroke="#3040c0" /></svg></Box>,
  <span key="b" className="text-[15px] font-bold text-[#3a40b8] tracking-[-1px]">RSI</span>,
  <span key="c" className="flex flex-col items-center text-[18px] font-bold leading-[14px] text-[#d03030]">
    <svg width="10" height="5" viewBox="0 0 10 5" className="block"><path d="M5 0L10 5H0Z" fill="#d03030" /></svg>
    S
  </span>,
  <svg key="d" width="24" height="24" viewBox="0 0 24 24"><path d="M12 1L16 6H14V10H18V8L23 12L18 16V14H14V18H16L12 23L8 18H10V14H6V16L1 12L6 8V10H10V6H8Z" fill="#1f50c8" /></svg>,
  <svg key="e" width="24" height="24" viewBox="0 0 24 24"><path d="M3 21L5 15L18 2L22 6L9 19Z" fill="#f0b030" stroke="#9a6a20" /><path d="M3 21L5 15L9 19Z" fill="#404040" /></svg>,
];
const SIDE3 = [
  <Box key="a"><span className="tracking-[-1px] text-[14px]">F5</span></Box>,
  <Box key="b"><svg width="16" height="14" viewBox="0 0 16 14"><path d="M2 7A6 5 0 0 1 13 4M14 7A6 5 0 0 1 3 10" fill="none" stroke="#40b050" strokeWidth="2.5" /></svg></Box>,
];
const SIDE_TXT = ["1", "5", "15", "30", "60"];
const SIDE_TXT2 = ["周", "月", "N", "多", "季", "年"];

function Sidebar() {
  const cell = "h-[34.5px] flex items-center justify-center text-[20px] text-[#1f4fa8] leading-none";
  return (
    <div className="w-[37px] shrink-0 bg-[#f0f0f0] flex flex-col">
      <div className="h-[32px] flex items-center justify-center">{SIDE[0]}</div>
      {SIDE.slice(1).map((s, i) => <div key={i} className={cell}>{s}</div>)}
      <div className="h-[14px] flex items-center px-[5px]"><div className="h-[1px] w-full bg-[#b0b0b0]"></div></div>
      {SIDE2.map((s, i) => <div key={i} className={cell}>{s}</div>)}
      <div className="h-[14px] flex items-center px-[5px]"><div className="h-[1px] w-full bg-[#b0b0b0]"></div></div>
      {SIDE3.map((s, i) => <div key={i} className={cell}>{s}</div>)}
      {SIDE_TXT.map((s) => <div key={s} className={cell}>{s}</div>)}
      <div className="h-[33px] mx-[3px] mt-[1px] border-t-2 border-l-2 border-[#c8c8c8] bg-[#f6f6f6] flex items-center justify-center text-[20px] text-[#1f4fa8]">日</div>
      {SIDE_TXT2.map((s) => <div key={s} className={cell}>{s}</div>)}
    </div>
  );
}

const BTN1 = [
  ["指标", "w-[46px]", S], ["窗口", "w-[46px]", S], ["MACD", "w-[63px]", S], ["VOL-TDX", "w-[87px]", S], ["CCI", "w-[44px]", S],
  ["趋势动力", "w-[84px]", S], ["主力监控", "w-[84px]", S], ["私募主图", "w-[83px]", S], ["MA2", "w-[47px]", S], ["测试主图", "w-[84px]", S],
  ["测试幅图A", "w-[95px]", S], ["测试幅图B", "w-[97px]", S], ["更多", "w-[47px]", S], ["设置", "w-[48px]", "text-[#3fe8e8]"],
];
const BTN2 = [
  ["扩展∧", "w-[61px]", S], ["关联报价", "w-[84px]", S], ["资金分布", "w-[84px]", S], ["综合资讯", "w-[84px]", "text-[#c0c000]"],
  ["行业资讯", "w-[84px]", "text-[#c0c000]"], ["互动问答", "w-[84px]", "text-[#e6e600]"], ["新用户福利专享", "w-[138px]", S],
];
function BtnRow({ items, h }) {
  return (
    <div className={"flex border-b-2 border-[#a80000] " + h}>
      {items.map(([t, w, c]) => (
        <div key={t} className={"flex items-center justify-center pt-[3px] border-r-2 border-[#a80000] text-[17.5px] whitespace-nowrap tracking-[-0.3px] leading-none " + w + " " + c}>
          {t}
        </div>
      ))}
    </div>
  );
}

const STATUS = [
  ["上证", "w-[55px] text-[23px] text-[#222]"], ["3278.90", "w-[100px] text-[#007a00]"], ["-5.39", "w-[74px] text-[#007a00]"], ["-0.16%", "w-[88px] text-[#007a00]"],
  ["3588亿", "w-[94px] text-[#111]"], ["沪深", "w-[54px] text-[23px] text-[#222]"], ["4318.41", "w-[100px] text-[#007a00]"], ["-3.05", "w-[75px] text-[#007a00]"],
  ["-0.07%", "w-[87px] text-[#007a00]"], ["2511亿", "w-[96px] text-[#111]"], ["创业", "w-[54px] text-[23px] text-[#222]"], ["2817.82", "w-[102px] text-[#ff1e1e]"],
  ["70.96", "w-[71px] text-[#ff1e1e]"], ["2.56%", "w-[90px] text-[#ff1e1e]"], ["1639亿", "w-[100px] text-[#111]"], ["总成交", "w-[85px] text-[#222]"], ["6553亿", "w-[80px] text-[#111]"],
  ["平安证券上证指数行情", "w-[260px] text-[#222]"],
];

const L1 = [
  ["MA5: 11.43", "w-[112px] text-[#d8d8d8]", false, "#ff2020"],
  ["MA10: 11.44", "w-[124px] text-[#ffff00]", true, "#40e8f0"],
  ["MA20: 12.23", "w-[122px] text-[#ff00ff]", false, "#ff2020"],
  ["MA60: 10.53", "w-[124px] text-[#00ff00]", false, "#ff2020"],
  ["MA120: 10.90", "w-[133px] text-[#a8a8a8]", true, "#40e8f0"],
  ["MA250: 11.25", "w-[130px] text-[#0000ff]", false, "#ff2020"],
];
const L2 = [
  ["浮动筹码: 24.37", "w-[150px] text-[#d8d8d8]", true],
  ["浮动筹码1: 15.08", "w-[162px] text-[#ffff00]", true],
  ["浮动筹码2: 9.32", "w-[151px] text-[#ff00ff]", true],
  ["获利筹码: 43.09", "w-[151px] text-[#00ff00]", true],
  [": 40.00", "w-[65px] text-[#a8a8a8]"],
  [": 20.00", "w-[61px] text-[#0000ff]"],
  [": 0.00", "w-[52px] text-[#d8d8d8]"],
  ["英雄: 0.00", "w-[88px] text-[#ff0000]"],
  ["绝地反击: 0.00", "w-[130px] text-[#ffff00]"],
];

export default function App() {
  return (
    <div className="relative w-[2160px] h-[1395px] overflow-hidden bg-black flex flex-col font-['Liberation_Sans','Noto_Sans_CJK_SC',sans-serif]">
      {/* title bar */}
      <div className="h-[35px] shrink-0 bg-[#f0f0f0] border-t border-[#c8c8c8] border-b-2 border-b-[#a0a0a0] flex items-center text-[18px] text-[#333] leading-none whitespace-nowrap">
        <svg width="25" height="25" viewBox="0 0 25 25" className="ml-[4px] shrink-0">
          <rect width="25" height="25" fill="#d83030" />
          <path d="M15 2L8 12C6 15 5 18 6 22C10 15 15 13 22 10L14 11L19 3Z" fill="#fff" />
        </svg>
        <span className="ml-[6px] w-[173px]">通达信金融终端</span>
        <div className="flex w-[954px]">
          {["行情", "市场", "资讯", "数据", "专题", "发现", "交易", "行业", "热点", "L1L2"].map((t) => (
            <span key={t} className="w-[72px] flex items-start">
              {t}
              {t === "发现" && <span className="ml-[7px] w-[5px] h-[5px] bg-[#ff1e1e] shrink-0"></span>}
            </span>
          ))}
        </div>
        <span className="text-[#ff2020] w-[118px] text-[19px]">交易未登录</span>
        <span className="text-[#ff2020] w-[316px] text-[19px]">泰永长征</span>
        <div className="flex">
          {["功能", "版面", "公式", "选项", "帮助"].map((t) => (
            <span key={t} className="w-[57px]">{t}</span>
          ))}
        </div>
        <div className="h-[32px] ml-[-1px] border-l-2 border-r-2 border-[#d8d8d8] w-[124px] flex items-center pl-[2px] text-[#333]">
          <span className="text-[17px] tracking-[0.6px] w-[83px]">14:10:36</span>
          <span>周四</span>
        </div>
        <svg width="18" height="18" viewBox="0 0 18 18" className="ml-[20px]"><path d="M12 2L6 9L12 16" fill="none" stroke="#444" strokeWidth="2.4" /></svg>
        <span className="ml-[20px] w-[15px] h-[3px] bg-[#444]"></span>
        <svg width="20" height="20" viewBox="0 0 20 20" className="ml-[18px]"><rect x="2" y="7" width="11" height="11" fill="none" stroke="#444" strokeWidth="2.4" /><path d="M7 6V2H18V13H14" fill="none" stroke="#444" strokeWidth="2.4" /></svg>
        <svg width="18" height="18" viewBox="0 0 18 18" className="ml-[18px]"><path d="M2 2L16 16M16 2L2 16" stroke="#444" strokeWidth="2.4" /></svg>
      </div>

      {/* body */}
      <div className="h-[1323px] shrink-0 flex">
        <div className="w-[1787px] shrink-0 flex flex-col">
          {/* period toolbar */}
          <div className="h-[31px] shrink-0 flex items-stretch border-b-2 border-[#a80000] text-[17.5px] text-[#c0c0c0] leading-none whitespace-nowrap">
            <div className="w-[36px] border-l border-r border-[#a80000] flex items-center justify-center">
              <span className="w-[17px] h-[14px] border-2 border-[#808080] rounded-[2px] flex justify-end"><span className="w-[6px] bg-[#808080]"></span></span>
            </div>
            <div className="ml-[6px] pt-[3px] flex items-center w-[1324px]">
              {PERIODS.map(([t, w, c]) => (
                <span key={t} className={w + " " + c}>{t}</span>
              ))}
            </div>
            {TOOLS.map((t) => (
              <div key={t} className="w-[52.5px] pt-[3px] border-l border-[#a80000] flex items-center justify-center">{t}</div>
            ))}
          </div>
          {/* main chart */}
          <div className="relative h-[734px] shrink-0">
            <MainChart />
            <div className="absolute left-[3px] top-[3px] h-[26px] flex items-center text-[17.5px] whitespace-nowrap leading-none">
              <span className="w-[127px] text-[#c0c0c0]">泰永长征(日线)</span>
              <Chevron />
              <span className="w-[11px]"></span>
              {L1.map(([t, c, d, ac]) => (
                <span key={t} className={"flex items-center " + c}>
                  {t}
                  <Arrow down={d} color={ac} />
                </span>
              ))}
            </div>
          </div>
          <div className="h-[2px] shrink-0 bg-[#c00000]"></div>
          {/* indicator chart */}
          <div className="relative h-[480px] shrink-0">
            <IndicatorChart />
            <div className="absolute left-[3px] top-[1px] h-[24px] flex items-center text-[17.5px] whitespace-nowrap leading-none">
              <Chevron />
              <span className="ml-[7px] w-[116px] text-[#c0c0c0]">英雄绝地反击</span>
              {L2.map(([t, c, a]) => (
                <span key={t} className={"flex items-center " + c}>
                  {t}
                  {a && <Arrow color="#ff2020" />}
                </span>
              ))}
            </div>
            <div className="absolute left-[1456px] top-[297px] w-[157px] h-[25px] bg-[#d8d8d8] border-2 border-t-white border-l-white border-b-[#808080] border-r-[#808080] flex items-center text-[15px] text-[#222] leading-none">
              <span className="w-[20px] text-center text-[#a00000] border-r border-[#909090]">A</span>
              <span className="w-[72px] text-center whitespace-nowrap">极品五笔</span>
              <span className="w-[24px] flex justify-center border-l border-r border-[#909090]">
                <svg width="12" height="14" viewBox="0 0 12 14"><path d="M8 1A6 6 0 1 0 8 13A5 5 0 0 1 8 1Z" fill="#222" /></svg>
              </span>
              <span className="w-[14px] text-center">··</span>
              <span className="flex-1 flex justify-center border-l border-[#909090]">
                <svg width="15" height="13" viewBox="0 0 15 13"><path d="M0 2H15M0 5H15M0 8H15M0 11H15" stroke="#555" /></svg>
              </span>
            </div>
          </div>
          {/* time axis */}
          <div className="relative h-[23px] shrink-0 border-t-2 border-[#a80000] flex text-[18px] leading-none text-[#ff2020]">
            <span className="w-[288px] pl-[6px] pt-[3px] flex items-center">2021年</span>
            <span className="w-[205px] pl-[2px] pt-[3px] border-l-2 border-[#a80000] flex items-center">2</span>
            <span className="w-[93px] pl-[2px] pt-[3px] border-l-2 border-[#a80000] flex items-center">3</span>
            <span className="w-[117px] bg-[#000080] pt-[1px] border-l-2 border-[#a80000] text-[#c8c8c8] flex items-center justify-center whitespace-nowrap text-[17px] tracking-[-0.3px]">2022/03/10/四</span>
            <span className="w-[88px] border-l-2 border-[#a80000]"></span>
            <span className="w-[242px] pl-[2px] pt-[3px] border-l-2 border-[#a80000] flex items-center">4</span>
            <span className="w-[60px] pl-[2px] pt-[3px] border-l-2 border-[#a80000] flex items-center">5</span>
            <svg width="1080" height="4" viewBox="0 0 1080 4" className="absolute left-0 top-0">
              {[104, 165, 226, 338, 388, 440, 646, 714, 860, 920, 975, 1055].map((x) => (
                <line key={x} x1={x} x2={x} y1="0" y2="4" stroke="#a80000" strokeWidth="1.5" />
              ))}
            </svg>
          </div>
          <BtnRow items={BTN1} h="h-[26px]" />
          <BtnRow items={BTN2} h="h-[27px]" />
        </div>
        <RightPanel />
        <Sidebar />
      </div>

      {/* status bar */}
      <div className="h-[37px] shrink-0 bg-[#f0f0f0] pt-[3px] flex items-center text-[21px] whitespace-nowrap leading-none">
        <span className="ml-[2px] w-[20px] h-[28px] rounded-[3px] border-2 border-[#e8a030] bg-[#f8d878] flex items-center justify-center">
          <span className="w-[10px] h-[14px] bg-[#f4b030] border border-[#c07820]"></span>
        </span>
        <span className="w-[3px]"></span>
        {STATUS.map(([t, c]) => (
          <span key={t} className={c}>{t}</span>
        ))}
      </div>

      {/* watermark */}
      <div className="absolute left-[1080px] top-[1286px] w-[1080px] h-[109px] bg-[#84b0dd]/96 flex items-center whitespace-nowrap">
        <span className="ml-[23px] text-[75px] font-black text-[#1a0d8c] leading-none tracking-[0px] font-['Noto_Sans_CJK_SC',sans-serif]">公式指标网</span>
        <svg width="108" height="108" viewBox="0 0 108 108" className="ml-[35px] shrink-0">
          <path d="M6 54A48 48 0 0 1 38 9" fill="none" stroke="#d9654f" strokeWidth="10" />
          <path d="M70 9A48 48 0 0 1 102 48" fill="none" stroke="#d9654f" strokeWidth="10" />
          <path d="M102 56A48 48 0 0 1 60 102" fill="none" stroke="#e8c84a" strokeWidth="10" />
          <path d="M44 2H62V16L58 26H68V46H58V52H70V64H58V72H72V84H58V104H50V84H36V72H50V64H38V52H50V46H38V26H48L44 16Z" fill="#e8c84a" />
          <text x="0" y="0" fontSize="8" fill="#1a2a6c" transform="translate(6,62) rotate(65)">www.9m8.cn</text>
        </svg>
        <span className="ml-[38px] text-[69px] font-bold text-white leading-none scale-y-[1.15] origin-center font-['DejaVu_Serif',serif]">www.9m8.cn</span>
      </div>
    </div>
  );
}
